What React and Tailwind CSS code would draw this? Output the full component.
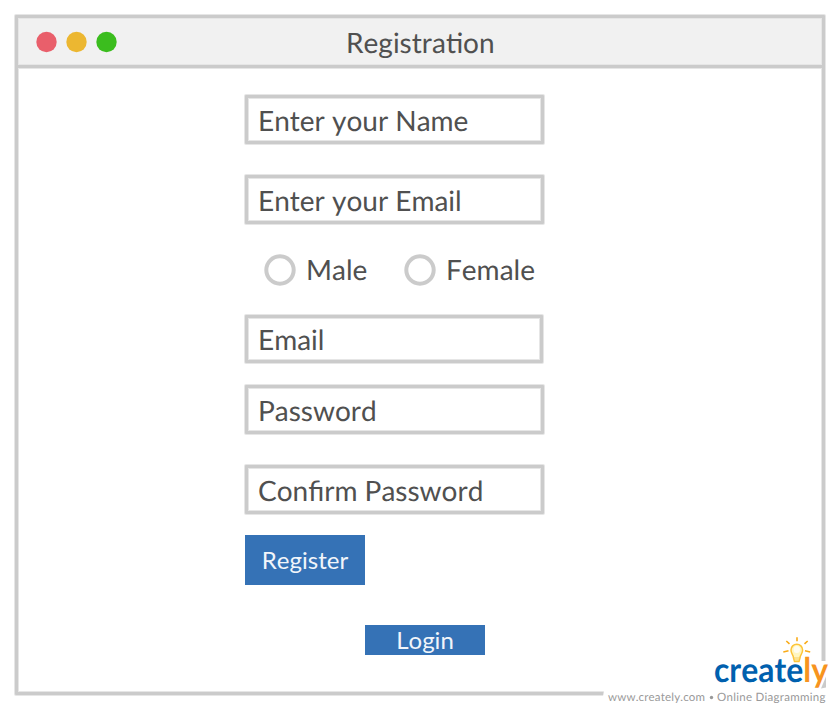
const edge = "border-3 border-[#cbcbcb] shadow-[0_0_0_1px_#e6e6e6,inset_0_0_0_1px_#e6e6e6]";

function Field({ label, className }) {
  return (
    <div className={`flex items-center rounded-[1px] bg-white pl-[10px] text-[28px] leading-none ${edge} ${className}`}>
      <span>{label}</span>
    </div>
  );
}

function Radio({ label, className }) {
  return (
    <label className={`flex items-center gap-[10px] ${className}`}>
      <svg className="h-8 w-8" viewBox="0 0 32 32">
        <circle cx="16" cy="16" r="13.700" fill="#fff" stroke="#cbcbcb" strokeWidth="4" />
      </svg>
      <span className="pb-[2px] text-[28px] leading-none">{label}</span>
    </label>
  );
}

function Logo() {
  return (
    <svg className="absolute left-[600px] top-[632px] h-[78px] w-[240px]" viewBox="600 632 240 78">
      <path d="M604 690h215v-29h12v49H601z" fill="#fff" />
      <path d="M821 688.500l5-12v11z" fill="#cbcbcb" />
      <text x="714" y="682" textLength="114" lengthAdjust="spacingAndGlyphs" fontFamily="Lato, sans-serif" fontSize="34" fontWeight="700" fill="#0060ae">
        create<tspan fill="#f7941e">ly</tspan>
      </text>
      <path d="M793.5 658c0-3.500-2.500-4-2.500-8a5.800 5.800 0 0 1 11.600 0c0 4-2.600 4.500-2.600 8l-1 3.500h-4.500z" fill="#fff6c0" stroke="#fdc437" strokeWidth="1.500" />
      <ellipse cx="796.800" cy="649.500" rx="3.200" ry="3.600" fill="#fffdf0" />
      <path d="M793.8 658h6M794.300 660h5" fill="none" stroke="#f8cf62" strokeWidth="1" />
      <path d="M797 637.200v4M786.300 641l3.200 2.900M807.700 641l-3.200 2.900M783.300 652l5.200-1.200M810.200 652l-5.200-1.200" stroke="#f9ab17" strokeWidth="1.600" />
      <g fontFamily="Lato, sans-serif" fontSize="11.500" fill="#999">
        <text x="608" y="701" textLength="97">www.creately.com</text>
        <circle cx="711.500" cy="697.500" r="1.700" />
        <text x="717" y="701" textLength="108.500">Online Diagramming</text>
      </g>
    </svg>
  );
}

export default function App() {
  return (
    <main className="relative h-[710px] w-[840px] overflow-hidden bg-white pl-[15px] pt-[15px] font-['Lato',sans-serif] text-[#505050] [font-kerning:none] [text-rendering:geometricPrecision]">
      <section className={`h-[680px] w-[810px] rounded-[1px] bg-white ${edge}`}>
        <header className="flex h-[50px] items-center border-b-3 border-[#cbcbcb] bg-[#f1f1f1] shadow-[0_1px_0_#e6e6e6,inset_0_0_0_1px_#e6e6e6]">
          <svg className="mt-px h-6 w-[328px]" viewBox="0 0 328 24">
            <circle cx="28.500" cy="12" r="10.200" fill="#e95f6b" />
            <circle cx="58.500" cy="12" r="10.200" fill="#ecb731" />
            <circle cx="88.500" cy="12" r="10.200" fill="#3bbd1e" />
          </svg>
          <h1 className="text-[28px] leading-none">Registration</h1>
        </header>
        <form className="flex flex-col items-start pl-[227px] pt-[27px]">
          <Field label="Enter your Name" className="h-[49px] w-[299px]" />
          <Field label="Enter your Email" className="mt-[31px] h-[49px] w-[299px]" />
          <div className="mt-[30px] flex h-8 pl-[19px]">
            <Radio label="Male" className="w-[140px]" />
            <Radio label="Female" className="" />
          </div>
          <Field label="Email" className="mt-[29px] h-[48px] w-[298px]" />
          <Field label="Password" className="mt-[22px] h-[49px] w-[299px]" />
          <Field label="Confirm Password" className="mt-[31px] h-[49px] w-[299px]" />
          <button type="button" className="mt-[21px] flex h-[50px] w-[120px] items-center justify-center bg-[#3572b6] text-[24px] leading-none text-[#f1f5fa]">Register</button>
          <button type="button" className="ml-[120px] mt-10 flex h-[30px] w-[120px] items-center justify-center bg-[#3572b6] text-[24px] leading-none text-[#f1f5fa]">Login</button>
        </form>
      </section>
      <Logo />
    </main>
  );
}
